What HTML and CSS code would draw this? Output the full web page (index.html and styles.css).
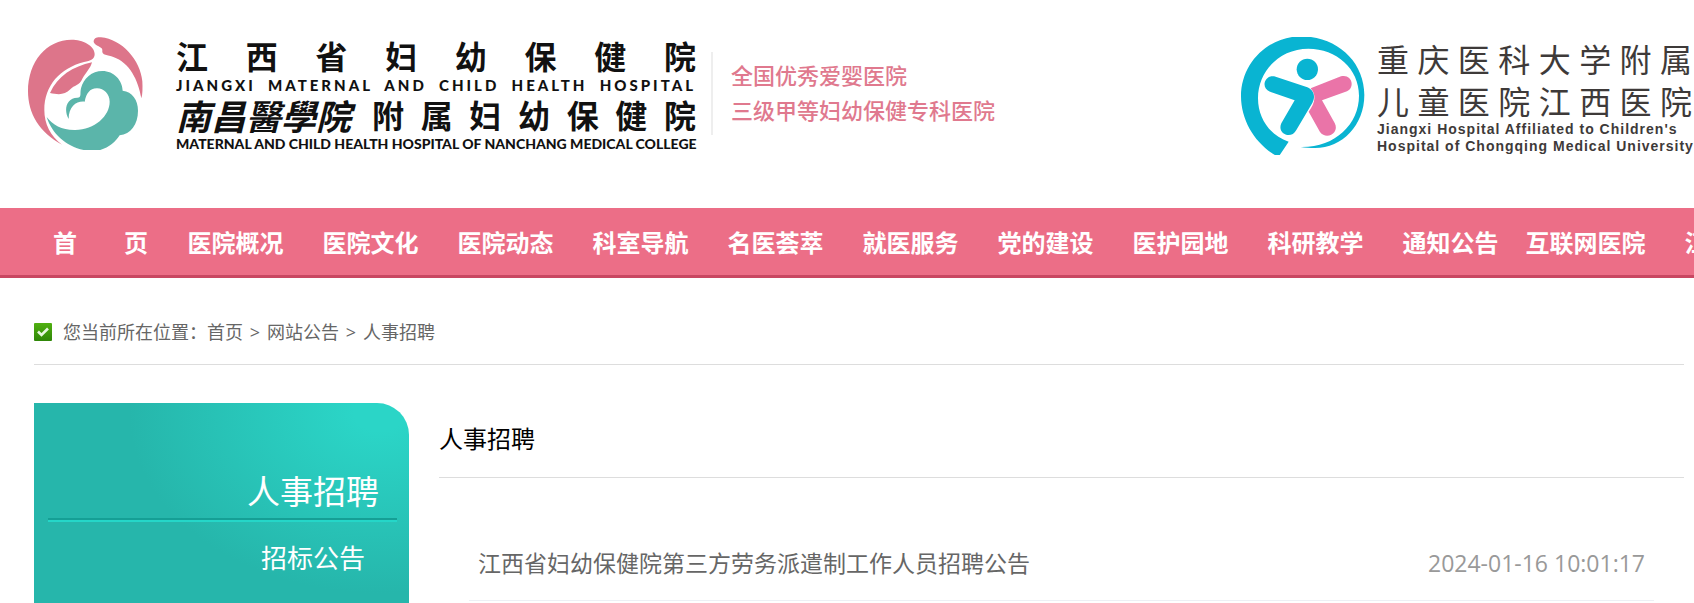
FILE: index.html
```html
<!DOCTYPE html>
<html lang="zh-CN">
<head>
    <meta charset="UTF-8">
    <meta name="viewport" content="width=device-width, initial-scale=1.0">
    <title>人事招聘</title>
    <link rel="stylesheet" href="styles.css">
</head>
<body>
    <header class="header">
        <div class="brand">
            <svg class="brand-logo" viewBox="84 51 345 339" aria-hidden="true">
                <path fill="#dd758a" d="M186 374C118 338 84 280 84 214C84 125 139 59 215 59C247 59 284 76 284 102C284 117 272 123 252 126C180 145 133 196 133 270C133 311 151 348 186 374Z"/>
                <path fill="#dd758a" d="M276 127C219 139 172 169 150 219C174 224 194 226 211 208C222 194 239 198 247 176C257 158 271 146 276 127Z"/>
                <path fill="#dd758a" d="M281 66C281 54 290 51 303 52C365 57 422 121 427 184C428 205 428 223 424 235C415 180 388 127 340 111C324 105 304 107 307 91C309 80 284 78 281 66Z"/>
                <path fill="#5bb5aa" d="M206 297C190 269 199 234 232 233C246 233 239 222 243 205C250 175 276 153 307 153C342 153 367 181 368 212C397 215 414 240 414 272C414 314 392 342 359 346C344 369 317 393 277 393C211 391 158 348 140 291C158 315 187 331 226 330C284 329 329 288 329 245C329 222 311 205 292 205C270 204 259 220 254 245C231 242 206 258 206 297Z"/>
            </svg>
            <div class="brand-text">
                <p class="brand-cn">江西省妇幼保健院</p>
                <p class="brand-en">JIANGXI MATERNAL AND CHILD HEALTH HOSPITAL</p>
                <div class="brand-row">
                    <p class="brand-script" lang="zh-TW">南昌醫學院</p>
                    <p class="brand-cn brand-sub">附属妇幼保健院</p>
                </div>
                <p class="brand-college">MATERNAL AND CHILD HEALTH HOSPITAL OF NANCHANG MEDICAL COLLEGE</p>
            </div>
            <div class="honors">
                <p>全国优秀爱婴医院</p>
                <p>三级甲等妇幼保健专科医院</p>
            </div>
        </div>
        <div class="partner">
            <svg class="partner-logo" viewBox="63 51 372 354" aria-hidden="true">
                <path fill="#09b4d2" d="M168 407C105 371 63 301 63 229C63 129 145 49 243 49C350 49 433 124 433 225C433 315 367 384 285 384C270 384 255 383 242 381C344 383 417 313 417 227C417 146 350 86 265 86C181 86 114 151 114 235C114 296 150 346 206 365L178 407Z"/>
                <circle fill="#09b4d2" cx="262" cy="148" r="32"/>
                <path fill="#ea74a8" d="M272 205L363 169C397 161 406 203 381 214L306 241L344 309C360 339 319 362 300 336L266 275C287 247 289 224 272 205Z"/>
                <path fill="#09b4d2" d="M167 170L262 202C282 210 287 231 277 249L229 330C213 361 170 340 184 310L224 241L150 215C119 203 136 160 167 170Z"/>
            </svg>
            <div class="partner-text">
                <p class="partner-cn">重庆医科大学附属</p>
                <p class="partner-cn">儿童医院江西医院</p>
                <p class="partner-en">Jiangxi Hospital Affiliated to Children's</p>
                <p class="partner-en">Hospital of Chongqing Medical University</p>
            </div>
        </div>
    </header>

    <nav class="nav">
        <ul class="nav-list">
            <li><a class="nav-home" href="#"><span>首</span><span>页</span></a></li>
            <li><a href="#">医院概况</a></li>
            <li><a href="#">医院文化</a></li>
            <li><a href="#">医院动态</a></li>
            <li><a href="#">科室导航</a></li>
            <li><a href="#">名医荟萃</a></li>
            <li><a href="#">就医服务</a></li>
            <li><a href="#">党的建设</a></li>
            <li><a href="#">医护园地</a></li>
            <li><a href="#">科研教学</a></li>
            <li><a href="#">通知公告</a></li>
            <li><a href="#">互联网医院</a></li>
            <li><a href="#">江西省</a></li>
        </ul>
    </nav>

    <div class="container">
        <div class="crumbs">
            <svg class="crumbs-icon" viewBox="0 0 18 18" aria-hidden="true">
                <defs>
                    <linearGradient id="tick" x1="0" y1="0" x2="0" y2="1">
                        <stop offset="0" stop-color="#50b010"/>
                        <stop offset="1" stop-color="#2f8608"/>
                    </linearGradient>
                </defs>
                <rect width="18" height="18" rx="1" fill="url(#tick)"/>
                <path d="M4 8.500L7.500 12L14 5.500" fill="none" stroke="#e8f7df" stroke-width="2.600"/>
            </svg>
            <span>您当前所在位置：</span>
            <a href="#">首页</a>
            <span class="crumbs-sep">&gt;</span>
            <a href="#">网站公告</a>
            <span class="crumbs-sep">&gt;</span>
            <a href="#">人事招聘</a>
        </div>

        <div class="content">
            <aside class="sidebar">
                <h2 class="sidebar-title">人事招聘</h2>
                <ul class="sidebar-list">
                    <li><a href="#">招标公告</a></li>
                </ul>
            </aside>
            <main class="main">
                <h1 class="main-title">人事招聘</h1>
                <ul class="news">
                    <li>
                        <a href="#">江西省妇幼保健院第三方劳务派遣制工作人员招聘公告</a>
                        <time datetime="2024-01-16T10:01:17">2024-01-16 10:01:17</time>
                    </li>
                </ul>
            </main>
        </div>
    </div>
</body>
</html>
```
FILE: styles.css
```css
* {
    margin: 0;
    padding: 0;
    box-sizing: border-box;
}

body {
    font-family: "Open Sans", "Noto Sans CJK SC", sans-serif;
    color: #666;
    background: #fff;
    overflow-x: hidden;
}

a {
    color: inherit;
    text-decoration: none;
}

ul {
    list-style: none;
}

/* header */
.header {
    display: flex;
    justify-content: space-between;
    align-items: flex-start;
    min-height: 208px;
    padding: 37px 2px 0 28px;
}

.brand,
.partner {
    display: flex;
    flex-shrink: 0;
}

.brand-logo {
    width: 115px;
    height: 113px;
}

.brand-text {
    width: 520px;
    margin-left: 33px;
    color: #111;
    white-space: nowrap;
}

.brand-cn {
    font-family: "Noto Sans CJK SC", sans-serif;
    font-size: 32px;
    font-weight: 700;
    line-height: 37px;
    text-align-last: justify;
}

.brand-en {
    font-family: Lato, sans-serif;
    font-size: 15px;
    font-weight: 900;
    line-height: 22px;
    letter-spacing: 3px;
    text-align-last: justify;
}

.brand-row {
    display: flex;
    justify-content: space-between;
}

.brand-script {
    font-family: "Noto Sans CJK TC", sans-serif;
    font-size: 35px;
    font-weight: 700;
    font-style: italic;
    line-height: 37px;
}

.brand-sub {
    width: 324px;
}

.brand-college {
    font-family: Lato, sans-serif;
    font-size: 14px;
    font-weight: 900;
    line-height: 21px;
    text-align-last: justify;
}

.honors {
    align-self: flex-start;
    margin: 15px 0 0 15px;
    padding: 6px 0 7px 18px;
    border-left: 2px solid #eee;
    color: #e0798e;
    font-size: 22px;
    font-weight: 500;
    line-height: 35px;
}

.partner-logo {
    width: 124px;
    height: 118px;
}

.partner-text {
    width: 315px;
    margin-left: 12px;
    color: #3e3a39;
    white-space: nowrap;
}

.partner-cn {
    font-family: "Noto Sans CJK SC", sans-serif;
    font-size: 32px;
    line-height: 42px;
    text-align-last: justify;
}

.partner-en {
    font-family: "Liberation Sans", sans-serif;
    font-size: 14px;
    font-weight: 700;
    line-height: 17px;
    letter-spacing: 1px;
}

/* main navigation */
.nav {
    padding-left: 33px;
    background: #ec6e87;
    border-bottom: 3px solid #c94762;
    overflow: hidden;
}

.nav-list {
    display: flex;
}

.nav-list li {
    flex: 0 0 135px;
}

.nav-list a {
    display: block;
    padding-top: 2px;
    color: #fff;
    font-size: 24px;
    font-weight: 700;
    line-height: 65px;
    text-align: center;
    white-space: nowrap;
}

.nav-list .nav-home {
    display: flex;
    justify-content: space-between;
    padding: 2px 20px 0;
}

/* page body */
.container {
    padding: 0 10px 0 34px;
}

.crumbs {
    display: flex;
    align-items: center;
    padding: 36px 0 14px;
    border-bottom: 1px solid #ddd;
    font-size: 18px;
    line-height: 36px;
}

.crumbs-icon {
    width: 18px;
    height: 18px;
    margin-right: 11px;
}

.crumbs-sep {
    width: 24px;
    text-align: center;
}

.content {
    display: flex;
    gap: 30px;
    margin-top: 38px;
}

.sidebar {
    flex: 0 0 375px;
    min-height: 200px;
    padding: 62px 12px 0 14px;
    background: radial-gradient(ellipse 250px 180px at 92% 5%, #2bd5c7 10%, #26b6ab 100%);
    border-top-right-radius: 32px;
    color: #fff;
    text-align: right;
}

.sidebar-title {
    padding-right: 18px;
    border-bottom: 2px solid #159f95;
    font-size: 33px;
    font-weight: 400;
    line-height: 53px;
}

.sidebar-list {
    padding: 18px 32px 20px 0;
    border-top: 2px solid #25d6c8;
    font-size: 26px;
    line-height: 36px;
}

.main {
    flex: 1;
    min-width: 0;
}

.main-title {
    padding: 18px 0 20px;
    border-bottom: 1px solid #ddd;
    color: #000;
    font-size: 24px;
    font-weight: 400;
    line-height: 36px;
}

.news {
    padding: 52px 30px 0;
}

.news li {
    display: flex;
    justify-content: space-between;
    padding: 15px 9px 19px;
    border-bottom: 1px solid #edf0f5;
    font-size: 23px;
    line-height: 36px;
}

.news time {
    color: #999;
}
```
